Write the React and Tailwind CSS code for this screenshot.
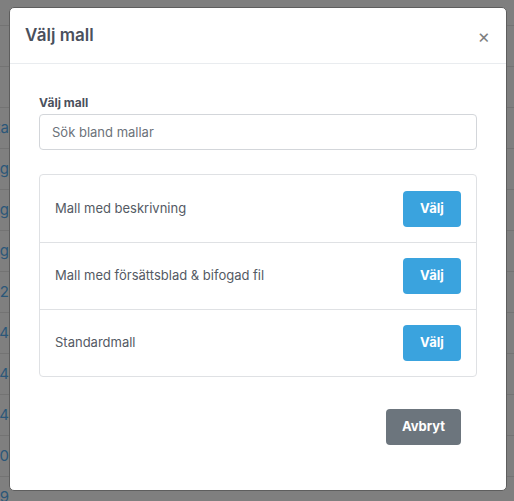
import React from "react";

const rows = ["Rapporta", "Bild.jpg", "Foto.jpg", "Skiss.jpg", "2022", "2021-04", "2020-04", "2019-04", "2010", "2009"];
const templates = ["Mall med beskrivning", "Mall med försättsblad & bifogad fil", "Standardmall"];

const App = () => {
  const [search, setSearch] = React.useState("");

  return (
    <div className="relative h-[501px] w-[514px] overflow-hidden bg-[#7f7f7f] font-['Inter','Liberation_Sans',sans-serif]">
      {/* page behind the overlay */}
      <div className="pt-[25px]">
        <div className="border-t border-[#737373]" />
        {[...Array(12)].map((_, i) => (
          <div key={i} className="flex h-[41px] items-center border-b border-[#737373]">
            <div className="flex w-[9px] justify-end overflow-hidden whitespace-nowrap text-[15px] text-[#2b5779]">
              {i >= 2 ? rows[i - 2] : ""}
            </div>
          </div>
        ))}
      </div>

      {/* modal */}
      <div className="absolute left-[9px] top-[7px] flex h-[484px] w-[498px] flex-col rounded-[5px] border border-[#5e5e5e] bg-white">
        <div className="flex h-[56px] items-center justify-between border-b border-[#e9ecef] pl-[15px] pr-[16px]">
          <h2 className="text-[17px] font-semibold text-[#4a505c]">Välj mall</h2>
          <button className="mt-[2px] text-[19px] leading-none text-[#808080]">×</button>
        </div>

        <div className="px-[29px] pt-[31px]">
          <label className="block text-[12px] leading-[16px] font-bold text-[#4a505c]">Välj mall</label>
          <input
            type="text"
            value={search}
            onChange={(e) => setSearch(e.target.value)}
            placeholder="Sök bland mallar"
            className="mt-[3px] block h-[36px] w-full rounded-[4px] border border-[#d3d6da] px-[12px] text-[13px] text-[#4a505c] placeholder:text-[#6c727a] focus:outline-none"
          />

          <div className="mt-[24px] rounded-[4px] border border-[#dfe1e4]">
            {templates.map((t, i) => (
              <div
                key={t}
                className={`flex h-[67px] items-center justify-between pl-[15px] pr-[15px] ${i > 0 ? "border-t border-[#dfe1e4]" : ""}`}
              >
                <span className="text-[13px] text-[#545a64]">{t}</span>
                <button className="h-[36px] w-[58px] rounded-[4px] bg-[#3aa3de] text-[13px] font-bold text-white">
                  Välj
                </button>
              </div>
            ))}
          </div>
        </div>

        <div className="mt-[32px] flex justify-end pr-[45px]">
          <button className="h-[36px] w-[75px] rounded-[4px] bg-[#6c757d] text-[13px] font-bold text-white">
            Avbryt
          </button>
        </div>
      </div>
    </div>
  );
};

export default App;
